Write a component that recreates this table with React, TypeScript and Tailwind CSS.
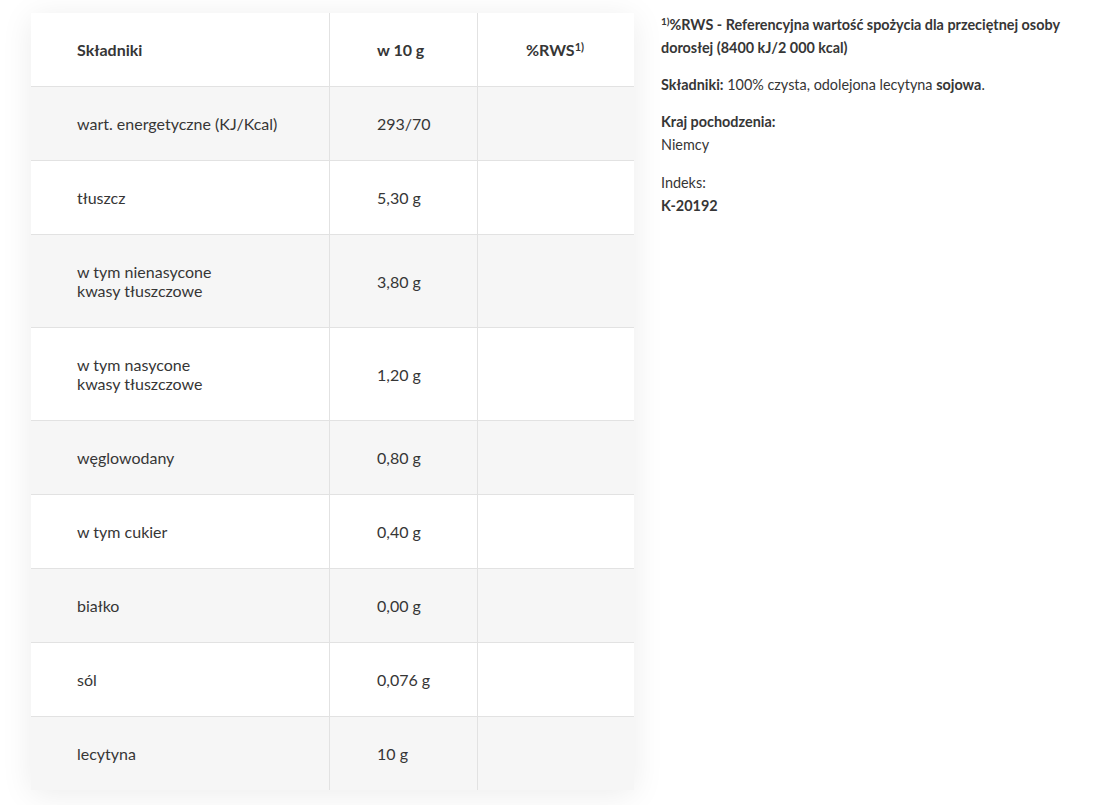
import React from "react";

type Row = { name: React.ReactNode; value: string; tall?: boolean };

const rows: Row[] = [
  { name: "wart. energetyczne (KJ/Kcal)", value: "293/70" },
  { name: "tłuszcz", value: "5,30 g" },
  {
    name: (
      <>
        w tym nienasycone
        <br />
        kwasy tłuszczowe
      </>
    ),
    value: "3,80 g",
    tall: true,
  },
  {
    name: (
      <>
        w tym nasycone
        <br />
        kwasy tłuszczowe
      </>
    ),
    value: "1,20 g",
    tall: true,
  },
  { name: "węglowodany", value: "0,80 g" },
  { name: "w tym cukier", value: "0,40 g" },
  { name: "białko", value: "0,00 g" },
  { name: "sól", value: "0,076 g" },
  { name: "lecytyna", value: "10 g" },
];

export default function App() {
  return (
    <div
      className="min-h-[805px] w-[1094px] bg-white text-[#363636]"
      style={{ fontFamily: "Lato, 'Noto Sans', sans-serif" }}
    >
      <div className="flex items-start pl-[31px] pt-[13px]">
        <div className="w-[603px] bg-white shadow-[0_4px_30px_rgba(0,0,0,0.08)] text-[16px] leading-[19px]">
          <div className="flex h-[73px]">
            <div className="w-[298px] flex items-center pl-[46px] font-bold">Składniki</div>
            <div className="w-[148px] flex items-center pl-[47px] border-l border-[#e2e2e2] font-bold">w 10 g</div>
            <div className="w-[157px] flex items-center pl-[48px] border-l border-[#e2e2e2] font-bold">
              <span>
                %RWS<sup className="text-[11px]">1)</sup>
              </span>
            </div>
          </div>
          {rows.map((r, i) => (
            <div
              key={i}
              className={`flex border-t border-[#e2e2e2] ${r.tall ? "h-[93px]" : "h-[74px]"} ${
                i % 2 === 0 ? "bg-[#f6f6f6]" : "bg-white"
              }`}
            >
              <div className="w-[298px] flex items-center pl-[46px]">
                <div>{r.name}</div>
              </div>
              <div className="w-[148px] flex items-center pl-[47px] border-l border-[#e2e2e2]">{r.value}</div>
              <div className="w-[157px] border-l border-[#e2e2e2]"></div>
            </div>
          ))}
        </div>
        <div className="ml-[27px] w-[425px] text-[14.4px] leading-[23px]">
          <p className="font-bold">
            <sup className="text-[10px]">1)</sup>%RWS - Referencyjna wartość spożycia dla przeciętnej osoby dorosłej (8400 kJ/2 000 kcal)
          </p>
          <p className="mt-[14px]">
            <b>Składniki:</b> 100% czysta, odolejona lecytyna <b>sojowa</b>.
          </p>
          <p className="mt-[14px]">
            <b>Kraj pochodzenia:</b>
            <br />
            Niemcy
          </p>
          <p className="mt-[15px]">
            Indeks:
            <br />
            <b>K-20192</b>
          </p>
        </div>
      </div>
    </div>
  );
}
